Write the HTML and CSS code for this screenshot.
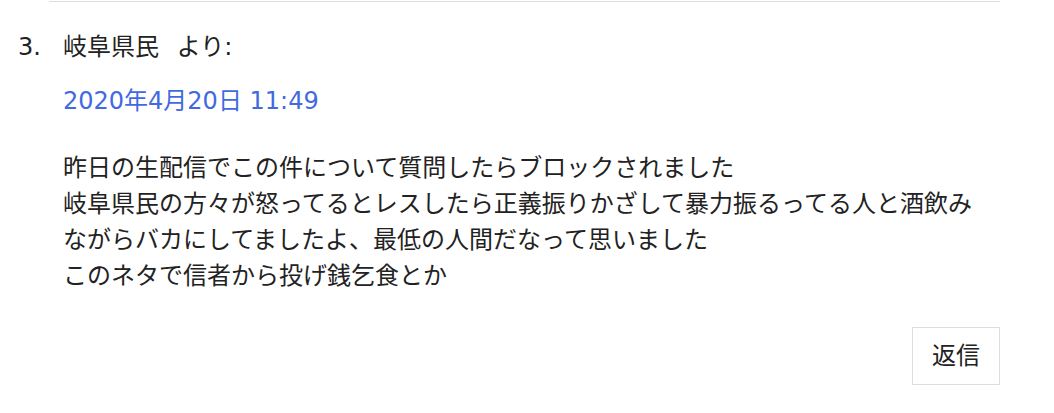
FILE: index.html
```html
<!DOCTYPE html>
<html lang="ja">
<head>
<meta charset="utf-8">
<link rel="stylesheet" href="styles.css">
</head>
<body>
<ol class="comments">
  <li class="comment">
    <span class="num">3.</span>
    <div class="body">
      <div class="author"><span class="name">岐阜県民</span> より:</div>
      <div class="date">2020年4月20日 11:49</div>
      <p class="text">昨日の生配信でこの件について質問したらブロックされました<br>岐阜県民の方々が怒ってるとレスしたら正義振りかざして暴力振るってる人と酒飲みながらバカにしてましたよ、最低の人間だなって思いました<br>このネタで信者から投げ銭乞食とか</p>
      <div class="actions"><button class="reply">返信</button></div>
    </div>
  </li>
</ol>
</body>
</html>
```
FILE: styles.css
```css
html, body {
  margin: 0;
  padding: 0;
  background: #fff;
}
body {
  font-family: "DejaVu Sans", "Noto Sans CJK JP", sans-serif;
  font-size: 24px;
  line-height: 36px;
  color: #222;
}
.comments {
  list-style: none;
  margin: 1px 0 0 0;
  padding: 0;
}
.comment {
  display: grid;
  grid-template-columns: 49px 951px;
}
.num {
  padding-top: 28px;
  padding-left: 18px;
}
.body {
  border-top: 1px solid #ddd;
  padding: 27px 0 0 14px;
}
.name {
  margin-right: 10px;
}
.date {
  margin-top: 18px;
  color: #4169e1;
}
.text {
  margin: 31px 14px 0 0;
}
.actions {
  display: flex;
  justify-content: flex-end;
  margin-top: 33px;
}
.reply {
  font: inherit;
  color: #222;
  background: #fff;
  border: 1px solid #ddd;
  padding: 10px 19px;
  line-height: 36px;
}
```
